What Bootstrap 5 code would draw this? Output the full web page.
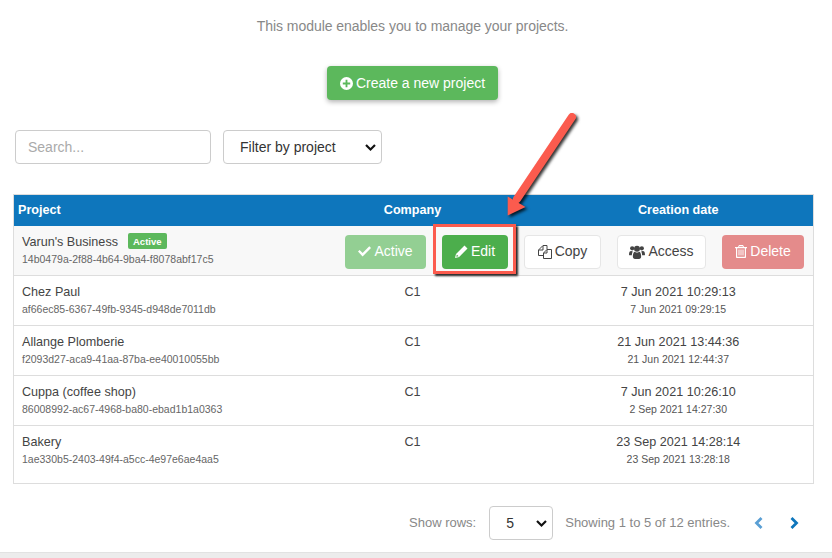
<!DOCTYPE html>
<html lang="en">
<head>
<meta charset="utf-8">
<title>Projects</title>
<link href="https://cdn.jsdelivr.net/npm/bootstrap@5.3.0/dist/css/bootstrap.min.css" rel="stylesheet">
<style>
html,body{height:558px;overflow:hidden}
body{font-family:"Liberation Sans",Arial,sans-serif;font-size:14px;color:#333;background:#fff;position:relative}
.page-wrap{padding:0 20px 0 13px;height:552px}
.intro{color:#888;font-size:14px;line-height:20px;margin:0;padding-top:16px;text-align:center;letter-spacing:-.04px}
.create-row{margin-top:30px;height:34px}
.btn-create{background:#5cb85c;color:#fff;border:0;border-radius:4px;height:34px;width:171px;padding:0;font-size:14px;box-shadow:0 2px 5px rgba(0,0,0,.3);display:flex;align-items:center;justify-content:center;gap:3px}
.filters{margin-top:30px;padding-left:2px;gap:12px}
.search-box{width:196px;height:34px;font-size:14px;padding:0 12px;border-color:#ccc;border-radius:4px;color:#333}
.search-box::placeholder{color:#aaa}
.pick{height:34px;font-size:14px;padding:0 16px;border-color:#ccc;border-radius:4px;color:#333;background-position:right 5px center;background-size:11px 9px;background-image:url("data:image/svg+xml,%3csvg xmlns='http://www.w3.org/2000/svg' viewBox='0 0 11 9'%3e%3cpath fill='none' stroke='%23111' stroke-width='2.2' d='M1 2l4.500 4.500L10 2'/%3e%3c/svg%3e")}
.pick-filter{width:159px;flex:none}
.pick-rows{width:64px;flex:none}
.proj-table{width:800px;max-width:800px;table-layout:fixed;margin:30px 0 0;border:1px solid #ddd;font-size:12.6px;color:#444;border-collapse:collapse}
.proj-table th{background:#0e76bc;color:#fff;font-weight:700;height:31px;padding:1px 4px 0;border:0;vertical-align:middle}
.proj-table td{height:50px;padding:7px 8px 0;border:0;border-top:1px solid #ddd;vertical-align:top;line-height:18px;background:transparent;color:#444;box-shadow:none}
.proj-table tr.is-current td{background:#f8f8f8;border-top:0}
.proj-table tr.tail td{height:58px}
.uuid{font-size:10.5px;color:#666;line-height:17px}
.when{font-size:10.5px;color:#555;line-height:17px}
.tag-active{background:#5cb85c;color:#fff;font-size:9.5px;font-weight:700;border-radius:2px;padding:2.5px 5px;margin-left:10px;line-height:11px;display:inline-block;vertical-align:1px}
.acts{gap:16px;padding:2px 1px 0 0}
.act{height:34px;font-size:14px;padding:0;border-radius:4px;display:inline-flex;align-items:center;justify-content:center;gap:3px;opacity:1}
.act-active{width:81px;background:#93cf93;color:#fff;border:0}
.act-edit{width:66px;background:#4cae4c;color:#fff;border:0}
.act-plain{background:#fff;border:1px solid #e6e6e6;color:#444}
.act-copy{width:77px}
.act-access{width:89px}
.act-del{width:82px;background:#e48b8b;color:#fff;border:0}
.pager{margin-top:22px;height:34px;padding-right:13px;color:#888;font-size:13px;width:799px}
.pager-label{margin-right:13px}
.pager-info{margin-left:12px}
.pager-nav{margin-left:24px;gap:27px}
.strip{position:absolute;left:0;right:0;top:552px;height:6px;background:#ececec;border-top:1px solid #e2e2e2}
.note-box{position:absolute;left:433px;top:224px;width:83px;height:50px;border:3px solid #fb5b4e;box-shadow:2px 2px 2px rgba(0,0,0,.85);pointer-events:none}
.note-arrow{position:absolute;left:490px;top:100px;width:100px;height:125px;filter:drop-shadow(2px 2px 1.5px rgba(0,0,0,.8));pointer-events:none}
svg.ico{flex:none;fill:currentColor}
svg.ico-line{flex:none;fill:none;stroke:currentColor;stroke-width:1}
</style>
</head>
<body>
<div class="page-wrap">
  <p class="intro">This module enables you to manage your projects.</p>
  <div class="create-row d-flex justify-content-center">
    <button class="btn btn-create" type="button">
      <svg class="ico" width="13" height="13" viewBox="0 0 14 14"><path d="M7 0a7 7 0 1 0 0 14A7 7 0 0 0 7 0zm4 8H8v3H6V8H3V6h3V3h2v3h3z"/></svg>Create a new project
    </button>
  </div>
  <div class="filters d-flex">
    <input class="form-control search-box" type="text" placeholder="Search...">
    <select class="form-select pick pick-filter"><option>Filter by project</option></select>
  </div>
  <table class="table proj-table">
    <colgroup><col style="width:268px"><col style="width:262px"><col style="width:270px"></colgroup>
    <thead>
      <tr><th>Project</th><th class="text-center">Company</th><th class="text-center">Creation date</th></tr>
    </thead>
    <tbody>
      <tr class="is-current">
        <td>Varun's Business<span class="tag-active">Active</span><div class="uuid">14b0479a-2f88-4b64-9ba4-f8078abf17c5</div></td>
        <td colspan="2">
          <div class="acts d-flex justify-content-end">
            <button class="btn act act-active" type="button"><svg class="ico" width="13" height="11" viewBox="0 0 13 11"><path d="M1.600 4L0 5.600 4.600 10.500 13 2 11.300.3 4.600 7z"/></svg>Active</button>
            <button class="btn act act-edit" type="button"><svg class="ico" width="13" height="13" viewBox="0 0 13 13"><path d="M9.500.6l3 3-8.400 8.400L0 13l1-4.100zM1.800 9.400l-.5 2.300 2.300-.5z"/></svg>Edit</button>
            <button class="btn act act-plain act-copy" type="button"><svg class="ico-line" width="14" height="14" viewBox="0 0 14 14"><path d="M5.500 10.500H.5V5L5 .5h4v4"/><path d="M5 .8V5H.8"/><path d="M9 4.500h4.500v9h-8V8z"/><path d="M9 4.800V8H5.800"/></svg>Copy</button>
            <button class="btn act act-plain act-access" type="button"><svg class="ico" width="16" height="14" viewBox="0 0 15 13"><circle cx="3" cy="3" r="2"/><circle cx="12" cy="3" r="2"/><circle cx="7.500" cy="3.500" r="2.800"/><path d="M0 9c0-2.500.8-3.500 2-3.500.7 0 1 .4 1.600.5C3 7 2.700 8 2.700 9.500H.8C.3 9.500 0 9.300 0 9zM15 9c0-2.500-.8-3.500-2-3.500-.7 0-1 .4-1.600.5.600 1 .9 2 .9 3.500h1.900c.5 0 .8-.2.800-.5zM3.600 10.800c0-3.200 1-4.600 2-4.600.6.500 1.200.8 1.900.8s1.300-.3 1.900-.8c1 0 2 1.400 2 4.600 0 1.300-.8 2.200-2 2.200H5.600c-1.200 0-2-.9-2-2.200z"/></svg>Access</button>
            <button class="btn act act-del" type="button"><svg class="ico" width="12" height="13" viewBox="0 0 12 13"><path fill-rule="evenodd" d="M4 0h4l1 2h3v1.200h-1V12c0 .6-.4 1-1 1H2c-.6 0-1-.4-1-1V3.200H0V2h3zM4.400 1.200L4 2h4l-.4-.8zM2.200 3.200v8.600h7.600V3.200zM3.500 4.500h1v6h-1zM5.500 4.500h1v6h-1zM7.500 4.500h1v6h-1z"/></svg>Delete</button>
          </div>
        </td>
      </tr>
      <tr>
        <td>Chez Paul<div class="uuid">af66ec85-6367-49fb-9345-d948de7011db</div></td>
        <td class="text-center">C1</td>
        <td class="text-center">7 Jun 2021 10:29:13<div class="when">7 Jun 2021 09:29:15</div></td>
      </tr>
      <tr>
        <td>Allange Plomberie<div class="uuid">f2093d27-aca9-41aa-87ba-ee40010055bb</div></td>
        <td class="text-center">C1</td>
        <td class="text-center">21 Jun 2021 13:44:36<div class="when">21 Jun 2021 12:44:37</div></td>
      </tr>
      <tr>
        <td>Cuppa (coffee shop)<div class="uuid">86008992-ac67-4968-ba80-ebad1b1a0363</div></td>
        <td class="text-center">C1</td>
        <td class="text-center">7 Jun 2021 10:26:10<div class="when">2 Sep 2021 14:27:30</div></td>
      </tr>
      <tr class="tail">
        <td>Bakery<div class="uuid">1ae330b5-2403-49f4-a5cc-4e97e6ae4aa5</div></td>
        <td class="text-center">C1</td>
        <td class="text-center">23 Sep 2021 14:28:14<div class="when">23 Sep 2021 13:28:18</div></td>
      </tr>
    </tbody>
  </table>
  <div class="pager d-flex align-items-center justify-content-end">
    <span class="pager-label">Show rows:</span>
    <select class="form-select pick pick-rows"><option>5</option></select>
    <span class="pager-info">Showing 1 to 5 of 12 entries.</span>
    <div class="pager-nav d-flex align-items-center">
      <svg width="9" height="12" viewBox="0 0 9 12"><path fill="none" stroke="#5a9fd4" stroke-width="2.800" d="M7.500 1L2.500 6l5 5"/></svg>
      <svg width="9" height="12" viewBox="0 0 9 12"><path fill="none" stroke="#0e76bc" stroke-width="2.800" d="M1.500 1l5 5-5 5"/></svg>
    </div>
  </div>
</div>
<div class="strip"></div>
<div class="note-box"></div>
<svg class="note-arrow" viewBox="490 100 100 125"><path d="M572 117L517 199" stroke="#fb5b4e" stroke-width="8" stroke-linecap="round" fill="none"/><path d="M507.700 215.500L507.700 196.500L525.500 207z" fill="#fb5b4e"/></svg>
<script src="https://cdn.jsdelivr.net/npm/bootstrap@5.3.0/dist/js/bootstrap.bundle.min.js"></script>
</body>
</html>
